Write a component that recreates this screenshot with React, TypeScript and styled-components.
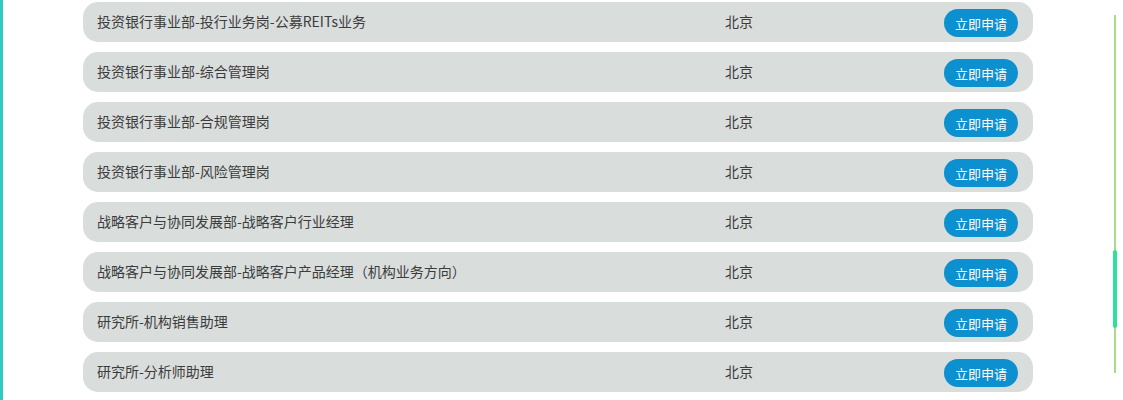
import React from "react";
import styled, { createGlobalStyle } from "styled-components";

const Global = createGlobalStyle`
  html, body { margin: 0; padding: 0; background: #ffffff; }
  body { font-family: "Microsoft YaHei", "Noto Sans CJK SC", "Noto Sans", sans-serif; }
`;

const Page = styled.div`
  display: flex;
  width: 1123px;
  height: 400px;
  overflow: hidden;
  background: #ffffff;
`;

const EdgeBar = styled.div`
  width: 3px;
  flex: 0 0 3px;
  background: #2ec9c3;
`;

const List = styled.ul`
  list-style: none;
  margin: 0;
  padding: 2px 0 0 80px;
  width: 950px;
  display: flex;
  flex-direction: column;
  gap: 10px;
`;

const Row = styled.li`
  height: 40px;
  border-radius: 15px;
  background: #d9dddc;
  display: grid;
  grid-template-columns: 628px 1fr auto;
  align-items: center;
  padding: 0 15px 0 14px;
  box-sizing: border-box;
  font-size: 14px;
  color: #3c3c3c;
`;

const Title = styled.span`
  white-space: nowrap;
  margin-top: -2px;
`;

const City = styled.span`
  margin-top: -2px;
`;

const Apply = styled.button`
  width: 74px;
  height: 28px;
  border: none;
  border-radius: 14px;
  background: #0c90d0;
  color: #ffffff;
  font-family: inherit;
  font-size: 13px;
  padding: 0;
  margin-top: 2px;
  cursor: pointer;
`;

const ScrollArea = styled.div`
  flex: 1;
  display: flex;
  justify-content: flex-end;
  padding: 15px 7px 0 0;
`;

const Track = styled.div`
  position: relative;
  width: 2px;
  height: 358px;
  background: #a6dc8c;
`;

const Thumb = styled.div`
  position: absolute;
  left: -1px;
  top: 235px;
  width: 4px;
  height: 78px;
  border-radius: 2px;
  background: #2fe09a;
`;

const jobs = [
  "投资银行事业部-投行业务岗-公募REITs业务",
  "投资银行事业部-综合管理岗",
  "投资银行事业部-合规管理岗",
  "投资银行事业部-风险管理岗",
  "战略客户与协同发展部-战略客户行业经理",
  "战略客户与协同发展部-战略客户产品经理（机构业务方向）",
  "研究所-机构销售助理",
  "研究所-分析师助理",
];

export default function App() {
  return (
    <>
      <Global />
      <Page>
        <EdgeBar />
        <List>
          {jobs.map((j) => (
            <Row key={j}>
              <Title>{j}</Title>
              <City>北京</City>
              <Apply>立即申请</Apply>
            </Row>
          ))}
        </List>
        <ScrollArea>
          <Track>
            <Thumb />
          </Track>
        </ScrollArea>
      </Page>
    </>
  );
}
